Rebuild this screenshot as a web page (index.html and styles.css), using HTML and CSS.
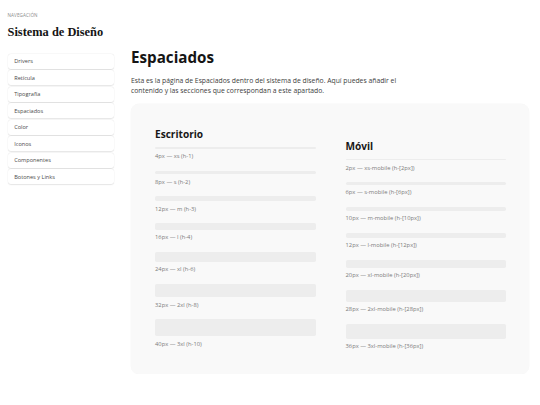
FILE: index.html
```html
<!DOCTYPE html>
<html lang="es">
<head>
<meta charset="utf-8">
<title>Espaciados — Sistema de Diseño</title>
<link rel="stylesheet" href="styles.css">
</head>
<body>
<div class="page">
  <aside class="sidebar">
    <div class="eyebrow">NAVEGACIÓN</div>
    <div class="brand">Sistema de Diseño</div>
    <nav class="nav">
      <a class="nav-item">Drivers</a>
      <a class="nav-item">Retícula</a>
      <a class="nav-item">Tipografía</a>
      <a class="nav-item">Espaciados</a>
      <a class="nav-item">Color</a>
      <a class="nav-item">Iconos</a>
      <a class="nav-item">Componentes</a>
      <a class="nav-item">Botones y Links</a>
    </nav>
  </aside>
  <main class="main">
    <h1 class="title">Espaciados</h1>
    <p class="intro">Esta es la página de Espaciados dentro del sistema de diseño. Aquí puedes añadir el contenido y las secciones que correspondan a este apartado.</p>
    <section class="card">
      <div class="col">
        <h2 class="col-title">Escritorio</h2>
        <div class="items">
          <div class="item"><div class="bar s4"></div><div class="label">4px — xs (h-1)</div></div>
          <div class="item"><div class="bar s8"></div><div class="label">8px — s (h-2)</div></div>
          <div class="item"><div class="bar s12"></div><div class="label">12px — m (h-3)</div></div>
          <div class="item"><div class="bar s16"></div><div class="label">16px — l (h-4)</div></div>
          <div class="item"><div class="bar s24"></div><div class="label">24px — xl (h-6)</div></div>
          <div class="item"><div class="bar s32"></div><div class="label">32px — 2xl (h-8)</div></div>
          <div class="item"><div class="bar s40"></div><div class="label">40px — 3xl (h-10)</div></div>
        </div>
      </div>
      <div class="col col-mobile">
        <h2 class="col-title">Móvil</h2>
        <div class="items">
          <div class="item"><div class="bar s2"></div><div class="label">2px — xs-mobile (h-[2px])</div></div>
          <div class="item"><div class="bar s6"></div><div class="label">6px — s-mobile (h-[6px])</div></div>
          <div class="item"><div class="bar s10"></div><div class="label">10px — m-mobile (h-[10px])</div></div>
          <div class="item"><div class="bar s12"></div><div class="label">12px — l-mobile (h-[12px])</div></div>
          <div class="item"><div class="bar s20"></div><div class="label">20px — xl-mobile (h-[20px])</div></div>
          <div class="item"><div class="bar s28"></div><div class="label">28px — 2xl-mobile (h-[28px])</div></div>
          <div class="item"><div class="bar s36"></div><div class="label">36px — 3xl-mobile (h-[36px])</div></div>
        </div>
      </div>
    </section>
  </main>
</div>
</body>
</html>
```

FILE: styles.css
```css
* { box-sizing: border-box; }

body {
  margin: 0;
  background: #ffffff;
  font-family: "Open Sans", "Noto Sans", sans-serif;
  color: #1a1a1a;
}

.page {
  display: flex;
  gap: 17.5px;
  padding: 12px 11px 0 7.5px;
}

.sidebar {
  width: 106px;
  flex-shrink: 0;
}

.eyebrow {
  font-size: 4.6px;
  line-height: 6.75px;
  letter-spacing: 0.1px;
  color: #8a8a8a;
}

.brand {
  margin-top: 5px;
  font-family: "Liberation Serif", "DejaVu Serif", serif;
  font-weight: 700;
  font-size: 12.4px;
  line-height: 16px;
  color: #141414;
}

.nav {
  margin-top: 14px;
  display: flex;
  flex-direction: column;
  gap: 1.5px;
}

.nav-item {
  display: block;
  padding: 3.3px 6.7px;
  font-size: 5.6px;
  line-height: 8.4px;
  color: #4a4a4a;
  background: #ffffff;
  border-radius: 3px;
  box-shadow: 0 0.4px 1.2px rgba(0, 0, 0, 0.09), 0 0 0 0.4px rgba(0, 0, 0, 0.035);
}

.main {
  flex: 1;
  min-width: 0;
  padding-top: 37px;
}

.title {
  margin: 0;
  font-size: 15.2px;
  line-height: 16.9px;
  font-weight: 700;
  color: #151515;
}

.intro {
  margin: 10px 0 0;
  max-width: 288px;
  font-size: 6.8px;
  line-height: 10px;
  color: #3d3d3d;
}

.card {
  margin-top: 8.3px;
  display: grid;
  grid-template-columns: 1fr 1fr;
  column-gap: 30px;
  align-items: start;
  padding: 23.7px 23px 23.5px 24px;
  background: #f9f9f9;
  border-radius: 8px;
  box-shadow: 0 0 0 0.4px rgba(0, 0, 0, 0.03);
}

.col-mobile {
  margin-top: 12px;
}

.col-title {
  margin: 0 0 6px;
  font-size: 10.1px;
  line-height: 13.5px;
  font-weight: 700;
  color: #171717;
}

.items {
  display: flex;
  flex-direction: column;
  gap: 10.1px;
}

.item {
  display: flex;
  flex-direction: column;
  gap: 3.4px;
}

.bar {
  background: #ededed;
  border-radius: 1.7px;
}

.label {
  font-size: 5.8px;
  line-height: 8.4px;
  color: #7a7a7a;
}

.s2 { height: 0.84px; }
.s4 { height: 1.7px; }
.s6 { height: 2.5px; }
.s8 { height: 3.4px; }
.s10 { height: 4.2px; }
.s12 { height: 5.1px; }
.s16 { height: 6.75px; }
.s20 { height: 8.4px; }
.s24 { height: 10.1px; }
.s28 { height: 11.8px; }
.s32 { height: 13.5px; }
.s36 { height: 15.2px; }
.s40 { height: 16.9px; }
```
